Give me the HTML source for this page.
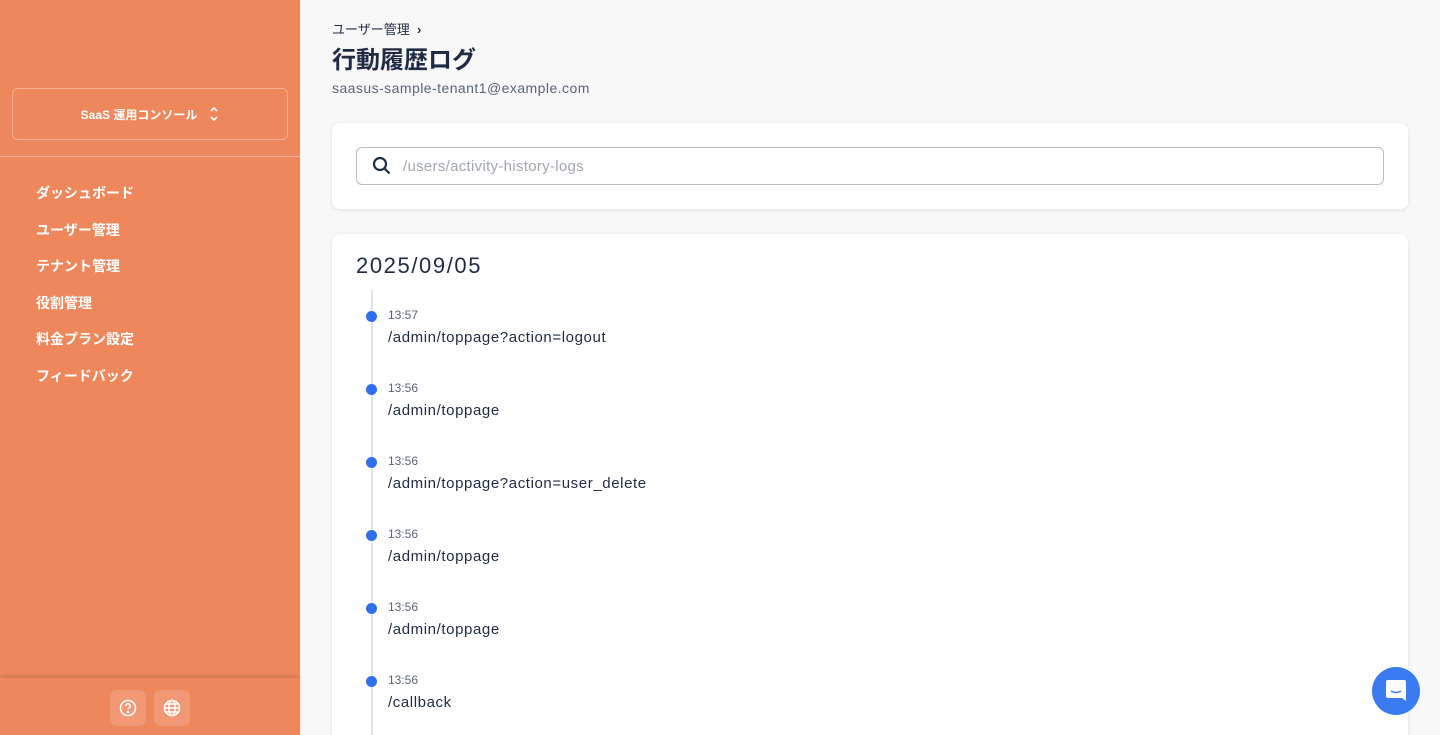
<!DOCTYPE html>
<html style="overflow:hidden;height:735px"><head><meta charset="utf-8"><style>
*{box-sizing:border-box;margin:0;padding:0}
body{width:1440px;height:735px;overflow:hidden;background:#f8f8f8;font-family:"Liberation Sans","Noto Sans CJK JP",sans-serif;position:relative}
.sb{position:absolute;left:0;top:0;width:300px;height:735px;background:#ee885c;color:#fff}
.sel{position:absolute;left:12px;top:88px;width:276px;height:52px;border:1px solid rgba(255,255,255,.35);border-radius:6px;font-size:12px;font-weight:bold;display:flex;align-items:center;justify-content:center;gap:12px}
.hr{position:absolute;left:0;top:156px;width:300px;height:1px;background:rgba(255,255,255,.35)}
.nav{position:absolute;left:36px;top:183px;font-size:14px;font-weight:bold}
.nav div{height:36.6px}
.foot{position:absolute;left:0;top:678px;width:300px;height:57px;box-shadow:0 -2px 4px rgba(0,0,0,.12);display:flex;justify-content:center;align-items:center;gap:8px;padding-top:2px}
.foot span{width:36px;height:36px;border-radius:7px;background:rgba(255,255,255,.15);display:flex;align-items:center;justify-content:center}
.main{position:absolute;left:332px;top:0;width:1076px;height:735px}
.bc{position:absolute;top:19px;font-size:13px;color:#1f2a44}
h1{position:absolute;top:40px;font-size:24px;color:#1f2a44}
.mail{position:absolute;top:80px;font-size:14px;color:#5a6478;letter-spacing:.45px}
.card{position:absolute;left:0;width:1076px;background:#fff;border-radius:8px;box-shadow:0 1px 4px rgba(0,0,0,.1)}
.search{position:absolute;left:24px;top:24px;width:1028px;height:38px;border:1px solid #b8bcc4;border-radius:6px;font-size:15px;color:#a0a6b0;padding-left:46px;line-height:38px;letter-spacing:.3px}
.date{position:absolute;left:24px;top:19px;font-size:22px;color:#1f2a44;letter-spacing:1.6px}
.line{position:absolute;left:39px;top:56px;width:2px;height:460px;background:#e0e2e6}
.it{position:absolute;left:56px}
.it .t{font-size:12px;color:#5a6478}
.it .p{font-size:15px;color:#1f2a44;margin-top:7px;letter-spacing:.6px}
.dot{position:absolute;left:-22px;top:3px;width:11px;height:11px;border-radius:50%;background:#2f6fed}
.chat{position:absolute;left:1372px;top:667px;width:48px;height:48px;border-radius:50%;background:#3b7bf1;display:flex;align-items:center;justify-content:center}
</style></head><body>
<div class="sb">
<div class="sel">SaaS 運用コンソール <svg width="10" height="16" viewBox="0 0 10 16" fill="none" stroke="#fff" stroke-width="1.6"><path d="M2 5l3-3 3 3M2 11l3 3 3-3"/></svg></div>
<div class="hr"></div>
<div class="nav"><div>ダッシュボード</div><div>ユーザー管理</div><div>テナント管理</div><div>役割管理</div><div>料金プラン設定</div><div>フィードバック</div></div>
<div class="foot"><span><svg width="18" height="18" viewBox="0 0 18 18" fill="none" stroke="#fff" stroke-width="1.5"><circle cx="9" cy="9" r="7.5"/><path d="M6.8 7a2.2 2.2 0 1 1 3 2c-.6.3-.8.7-.8 1.3"/><circle cx="9" cy="13" r=".5" fill="#fff"/></svg></span><span><svg width="18" height="18" viewBox="0 0 18 18" fill="none" stroke="#fff" stroke-width="1.5"><circle cx="9" cy="9" r="7.5"/><ellipse cx="9" cy="9" rx="3.2" ry="7.5"/><path d="M1.5 9h15M3 5h12M3 13h12"/></svg></span></div>
</div>
<div class="main">
<div class="bc">ユーザー管理 &nbsp;<b>›</b></div>
<h1>行動履歴ログ</h1>
<div class="mail">saasus-sample-tenant1@example.com</div>
<div class="card" style="top:123px;height:86px">
<svg style="position:absolute;left:40px;top:33px" width="20" height="20" viewBox="0 0 20 20" fill="none" stroke="#1f2a44" stroke-width="2.2"><circle cx="8" cy="8" r="6"/><path d="M12.5 12.5l5 5"/></svg>
<div class="search">/users/activity-history-logs</div></div>
<div class="card" style="top:234px;height:520px">
<div class="date">2025/09/05</div>
<div class="line"></div>
<div class="it" style="top:74px"><div class="dot"></div><div class="t">13:57</div><div class="p">/admin/toppage?action=logout</div></div>
<div class="it" style="top:147px"><div class="dot"></div><div class="t">13:56</div><div class="p">/admin/toppage</div></div>
<div class="it" style="top:220px"><div class="dot"></div><div class="t">13:56</div><div class="p">/admin/toppage?action=user_delete</div></div>
<div class="it" style="top:293px"><div class="dot"></div><div class="t">13:56</div><div class="p">/admin/toppage</div></div>
<div class="it" style="top:366px"><div class="dot"></div><div class="t">13:56</div><div class="p">/admin/toppage</div></div>
<div class="it" style="top:439px"><div class="dot"></div><div class="t">13:56</div><div class="p">/callback</div></div>
</div>
</div>
<div class="chat"><svg width="22" height="24" viewBox="0 0 22 24"><path d="M3 1h16a2 2 0 0 1 2 2v19l-4-3H3a2 2 0 0 1-2-2V3a2 2 0 0 1 2-2z" fill="#fff"/><path d="M6 12q5 3 10 0" stroke="#3b7bf1" stroke-width="1.5" fill="none"/></svg></div>
</body></html>
